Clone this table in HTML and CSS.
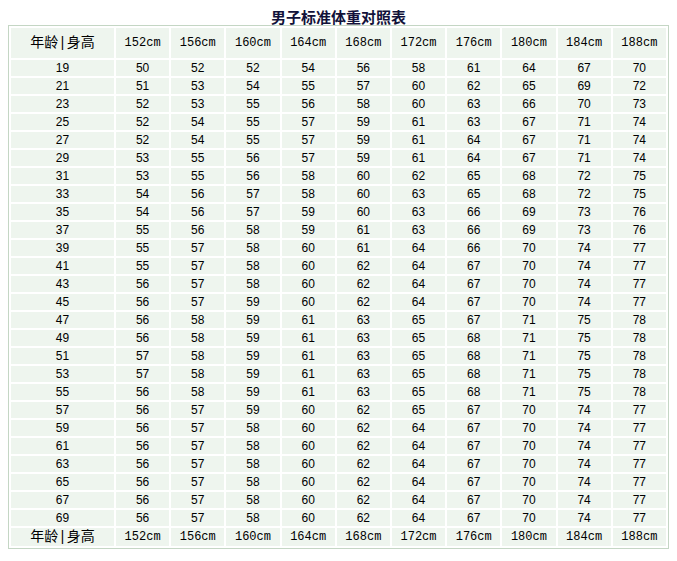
FILE: index.html
```html
<!DOCTYPE html>
<html lang="zh">
<head>
<meta charset="utf-8">
<title>男子标准体重对照表</title>
<link rel="stylesheet" href="styles.css">
</head>
<body>
<table class="weight">
<caption class="title">男子标准体重对照表</caption>
<colgroup><col class="c-age"><col span="10"></colgroup>
<thead>
<tr class="head"><td class="lbl">年龄|身高</td><td>152cm</td><td>156cm</td><td>160cm</td><td>164cm</td><td>168cm</td><td>172cm</td><td>176cm</td><td>180cm</td><td>184cm</td><td>188cm</td></tr>
</thead>
<tbody>
<tr><td>19</td><td>50</td><td>52</td><td>52</td><td>54</td><td>56</td><td>58</td><td>61</td><td>64</td><td>67</td><td>70</td></tr>
<tr><td>21</td><td>51</td><td>53</td><td>54</td><td>55</td><td>57</td><td>60</td><td>62</td><td>65</td><td>69</td><td>72</td></tr>
<tr><td>23</td><td>52</td><td>53</td><td>55</td><td>56</td><td>58</td><td>60</td><td>63</td><td>66</td><td>70</td><td>73</td></tr>
<tr><td>25</td><td>52</td><td>54</td><td>55</td><td>57</td><td>59</td><td>61</td><td>63</td><td>67</td><td>71</td><td>74</td></tr>
<tr><td>27</td><td>52</td><td>54</td><td>55</td><td>57</td><td>59</td><td>61</td><td>64</td><td>67</td><td>71</td><td>74</td></tr>
<tr><td>29</td><td>53</td><td>55</td><td>56</td><td>57</td><td>59</td><td>61</td><td>64</td><td>67</td><td>71</td><td>74</td></tr>
<tr><td>31</td><td>53</td><td>55</td><td>56</td><td>58</td><td>60</td><td>62</td><td>65</td><td>68</td><td>72</td><td>75</td></tr>
<tr><td>33</td><td>54</td><td>56</td><td>57</td><td>58</td><td>60</td><td>63</td><td>65</td><td>68</td><td>72</td><td>75</td></tr>
<tr><td>35</td><td>54</td><td>56</td><td>57</td><td>59</td><td>60</td><td>63</td><td>66</td><td>69</td><td>73</td><td>76</td></tr>
<tr><td>37</td><td>55</td><td>56</td><td>58</td><td>59</td><td>61</td><td>63</td><td>66</td><td>69</td><td>73</td><td>76</td></tr>
<tr><td>39</td><td>55</td><td>57</td><td>58</td><td>60</td><td>61</td><td>64</td><td>66</td><td>70</td><td>74</td><td>77</td></tr>
<tr><td>41</td><td>55</td><td>57</td><td>58</td><td>60</td><td>62</td><td>64</td><td>67</td><td>70</td><td>74</td><td>77</td></tr>
<tr><td>43</td><td>56</td><td>57</td><td>58</td><td>60</td><td>62</td><td>64</td><td>67</td><td>70</td><td>74</td><td>77</td></tr>
<tr><td>45</td><td>56</td><td>57</td><td>59</td><td>60</td><td>62</td><td>64</td><td>67</td><td>70</td><td>74</td><td>77</td></tr>
<tr><td>47</td><td>56</td><td>58</td><td>59</td><td>61</td><td>63</td><td>65</td><td>67</td><td>71</td><td>75</td><td>78</td></tr>
<tr><td>49</td><td>56</td><td>58</td><td>59</td><td>61</td><td>63</td><td>65</td><td>68</td><td>71</td><td>75</td><td>78</td></tr>
<tr><td>51</td><td>57</td><td>58</td><td>59</td><td>61</td><td>63</td><td>65</td><td>68</td><td>71</td><td>75</td><td>78</td></tr>
<tr><td>53</td><td>57</td><td>58</td><td>59</td><td>61</td><td>63</td><td>65</td><td>68</td><td>71</td><td>75</td><td>78</td></tr>
<tr><td>55</td><td>56</td><td>58</td><td>59</td><td>61</td><td>63</td><td>65</td><td>68</td><td>71</td><td>75</td><td>78</td></tr>
<tr><td>57</td><td>56</td><td>57</td><td>59</td><td>60</td><td>62</td><td>65</td><td>67</td><td>70</td><td>74</td><td>77</td></tr>
<tr><td>59</td><td>56</td><td>57</td><td>58</td><td>60</td><td>62</td><td>64</td><td>67</td><td>70</td><td>74</td><td>77</td></tr>
<tr><td>61</td><td>56</td><td>57</td><td>58</td><td>60</td><td>62</td><td>64</td><td>67</td><td>70</td><td>74</td><td>77</td></tr>
<tr><td>63</td><td>56</td><td>57</td><td>58</td><td>60</td><td>62</td><td>64</td><td>67</td><td>70</td><td>74</td><td>77</td></tr>
<tr><td>65</td><td>56</td><td>57</td><td>58</td><td>60</td><td>62</td><td>64</td><td>67</td><td>70</td><td>74</td><td>77</td></tr>
<tr><td>67</td><td>56</td><td>57</td><td>58</td><td>60</td><td>62</td><td>64</td><td>67</td><td>70</td><td>74</td><td>77</td></tr>
<tr><td>69</td><td>56</td><td>57</td><td>58</td><td>60</td><td>62</td><td>64</td><td>67</td><td>70</td><td>74</td><td>77</td></tr>
</tbody>
<tfoot>
<tr class="foot"><td class="lbl">年龄|身高</td><td>152cm</td><td>156cm</td><td>160cm</td><td>164cm</td><td>168cm</td><td>172cm</td><td>176cm</td><td>180cm</td><td>184cm</td><td>188cm</td></tr>
</tfoot>
</table>
</body>
</html>
```
FILE: styles.css
```css
html, body {
  background: #ffffff;
}
body {
  margin: 8px;
  font-family: "Liberation Sans", "Noto Sans CJK SC", sans-serif;
  color: #000;
}
.weight {
  width: 661px;
  table-layout: fixed;
  border-collapse: separate;
  border-spacing: 2px;
  border: 1px solid #c4d6c4;
}
.title {
  font-family: "Noto Sans CJK SC", sans-serif;
  font-size: 15px;
  font-weight: bold;
  line-height: 17px;
  height: 17px;
  color: #12123a;
  text-align: center;
}
.c-age {
  width: 103px;
}
.weight td {
  background: #eef5ee;
  padding: 0;
  text-align: center;
  font-size: 12px;
  height: 16px;
  line-height: 16px;
}
.weight .head td {
  height: 30px;
  line-height: 30px;
  font-family: "Liberation Mono", "Noto Sans CJK SC", monospace;
  font-size: 12px;
}
.weight .foot td {
  height: 18px;
  line-height: 18px;
  font-family: "Liberation Mono", "Noto Sans CJK SC", monospace;
  font-size: 12px;
}
.weight .head td.lbl,
.weight .foot td.lbl {
  font-family: "Liberation Mono", "Noto Sans CJK SC", sans-serif;
  font-size: 14px;
}
```
